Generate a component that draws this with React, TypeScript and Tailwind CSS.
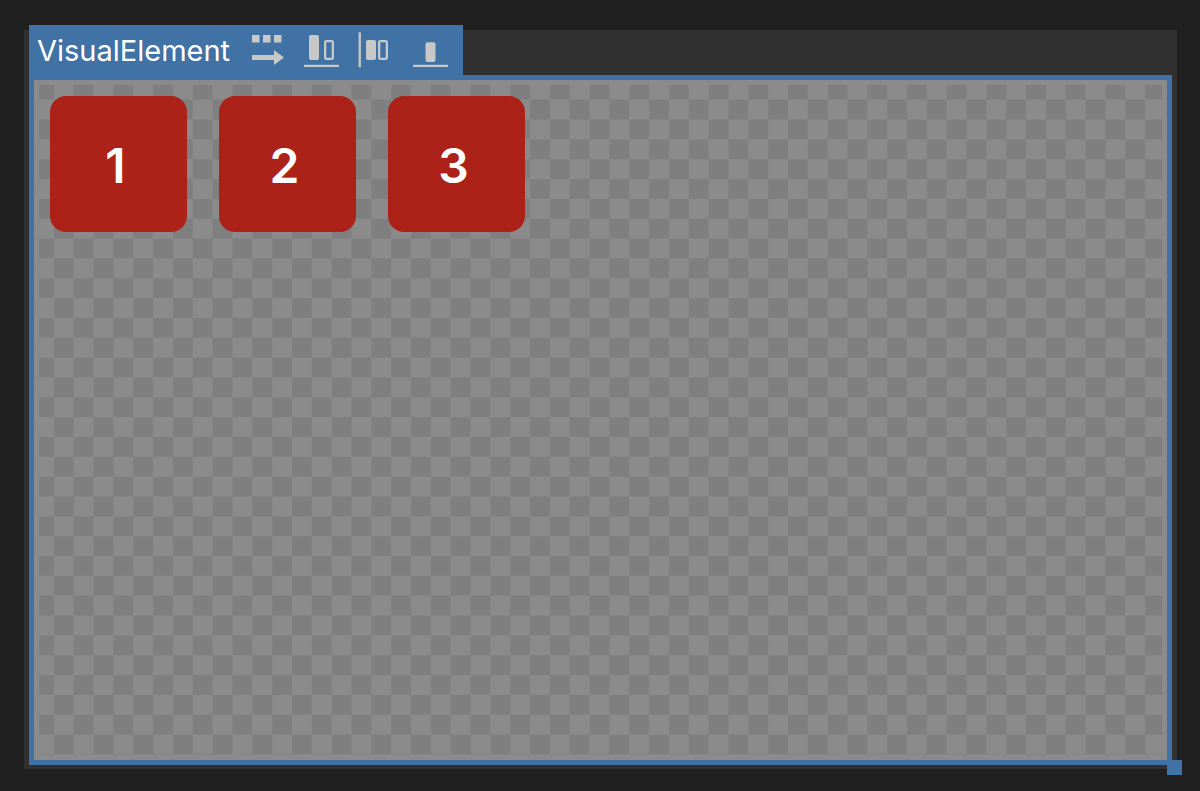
const PITCH = 19.84;

function Checkerboard() {
  return (
    <svg aria-hidden="true" className="absolute inset-0 h-full w-full">
      <defs>
        <pattern id="checker" x="14.9" y="14.7" width={PITCH * 2} height={PITCH * 2} patternUnits="userSpaceOnUse">
          <rect width={PITCH} height={PITCH} fill="#7f7f7f" />
          <rect x={PITCH} y={PITCH} width={PITCH} height={PITCH} fill="#7f7f7f" />
        </pattern>
      </defs>
      <rect width="100%" height="100%" fill="url(#checker)" />
    </svg>
  );
}

function DirectionIcon() {
  return (
    <svg viewBox="0 0 34 36" className="h-9 w-[34px]" fill="#c8c8c8" aria-hidden="true">
      <path d="M1 3h7.500v7.500H1zM12 3h7.500v7.500h-7.500zM23 3h7.500v7.500h-7.500zM1 22.900h22v-5l10 7.500-10 7.500v-5H1z" />
    </svg>
  );
}

function AlignIcon() {
  return (
    <svg viewBox="0 0 36 36" className="h-9 w-9" fill="#c8c8c8" aria-hidden="true">
      <rect x="6" y="3" width="10" height="25" rx="2" />
      <rect x="22.150" y="9.150" width="7.700" height="17.700" rx="1.200" fill="none" stroke="#c8c8c8" strokeWidth="2.300" />
      <rect x="1" y="32.800" width="35" height="2.200" />
    </svg>
  );
}

function JustifyIcon() {
  return (
    <svg viewBox="0 0 34 36" className="h-9 w-[34px]" fill="#c8c8c8" aria-hidden="true">
      <rect x="0.600" y="0.300" width="2.300" height="35" />
      <rect x="8" y="8" width="10" height="20" rx="2" />
      <rect x="21.150" y="9.150" width="7.700" height="17.700" rx="1.200" fill="none" stroke="#c8c8c8" strokeWidth="2.300" />
    </svg>
  );
}

function AlignEndIcon() {
  return (
    <svg viewBox="0 0 36 36" className="h-9 w-9" fill="#c8c8c8" aria-hidden="true">
      <rect x="12.500" y="10.300" width="10" height="19.700" rx="2" />
      <rect x="0" y="32.800" width="35" height="2.200" />
    </svg>
  );
}

export default function App() {
  return (
    <main className="flex min-h-screen flex-col bg-[#202020] pt-[30px] pr-[23px] pb-[22px] pl-6 font-[Inter,sans-serif]">
      <section className="flex flex-1 flex-col bg-[#303030] px-[5px] pb-1">
        <header className="-mt-[5px] flex h-[50px] items-center self-start bg-[#4072a5] pr-[14px] pl-2">
          <h1 className="w-[214px] text-[29px] leading-none font-normal text-white">VisualElement</h1>
          <div className="flex items-center">
            <button type="button" aria-label="Flex direction: row" className="mr-[18px]"><DirectionIcon /></button>
            <button type="button" aria-label="Align items: end" className="mr-[19px]"><AlignIcon /></button>
            <button type="button" aria-label="Justify content: start" className="mr-[21px]"><JustifyIcon /></button>
            <button type="button" aria-label="Align self: end"><AlignEndIcon /></button>
          </div>
        </header>
        <div className="relative flex flex-1 flex-col border-[5px] border-[#4072a5] bg-[#8b8b8b] p-[5px]">
          <div className="relative flex flex-1 items-start gap-8 px-[11px] pt-[11px]">
            <Checkerboard />
            {[1, 2, 3].map((n) => (
              <div key={n} className="relative flex h-[136px] w-[137px] items-center justify-center rounded-2xl bg-[#ac2218] pt-1 pr-[6px] text-5xl leading-none font-semibold text-white">
                {n}
              </div>
            ))}
          </div>
          <span className="absolute -right-[15px] -bottom-[15px] size-[15px] bg-[#4072a5]" />
        </div>
      </section>
    </main>
  );
}
